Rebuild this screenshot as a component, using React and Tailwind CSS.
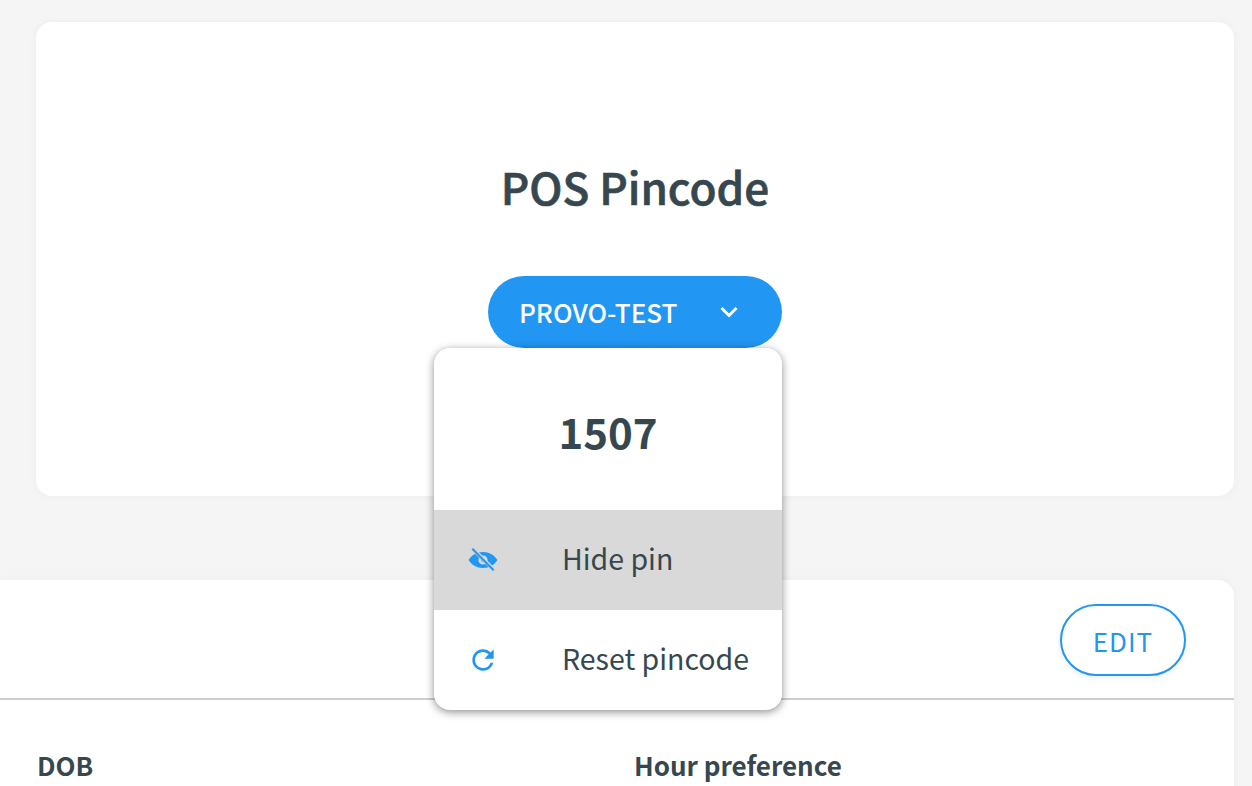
import React from "react";

const font = "font-['Noto_Sans_CJK_SC','Source_Sans_Pro','Noto_Sans',sans-serif]";

const EyeOffIcon = () => (
  <svg width="32" height="32" viewBox="0 0 30 30" fill="none">
    <path
      fillRule="evenodd"
      d="M15 7.500c-5.800 0-10.800 3-13.500 7.500 2.700 4.500 7.700 7.500 13.500 7.500s10.800-3 13.500-7.500C25.800 10.500 20.800 7.500 15 7.500Zm0 3.200a4.300 4.300 0 1 1 0 8.600 4.300 4.300 0 0 1 0-8.600Z"
      fill="#2196f3"
    />
    <path d="M15 12.800a2.200 2.200 0 1 1 0 4.400 2.200 2.200 0 0 1 0-4.400Z" fill="#2196f3" opacity="0.5" />
    <path d="M6 5 25.500 24.500" stroke="#d9d9d9" strokeWidth="3.600" />
    <path d="M5 4.500 25 24.500" stroke="#2196f3" strokeWidth="2" />
  </svg>
);

const RefreshIcon = () => (
  <svg width="32" height="32" viewBox="0 0 24 24" fill="#2196f3">
    <path d="M17.650 6.350A7.958 7.958 0 0 0 12 4c-4.420 0-7.990 3.580-7.990 8s3.570 8 7.990 8c3.730 0 6.840-2.550 7.730-6h-2.080A5.990 5.990 0 0 1 12 18c-3.310 0-6-2.690-6-6s2.690-6 6-6c1.660 0 3.140.69 4.220 1.780L13 11h7V4l-2.350 2.350Z" />
  </svg>
);

const MenuItem = ({ icon, label, active }) => (
  <div className={`flex h-[100px] items-center ${active ? "bg-[#d9d9d9]" : ""}`}>
    <div className="flex w-[128px] justify-center pr-[31px]">{icon}</div>
    <span className="pb-[3px] text-[28.5px] leading-none text-[#37474f]">{label}</span>
  </div>
);

export default function App() {
  return (
    <div className={`h-[786px] overflow-hidden bg-[#f5f5f5] pt-[22px] pr-[18px] ${font}`}>
      <section className="relative ml-[36px] flex h-[474px] flex-col items-center rounded-[16px] bg-white pt-[132px] shadow-[0_0_10px_rgba(0,0,0,0.04)]">
        <h1 className="text-[44px] leading-[64px] font-medium text-[#37474f] [-webkit-text-stroke:0.7px_#37474f]">
          POS Pincode
        </h1>
        <div className="relative mt-[58px]">
          <button
            type="button"
            className="flex h-[72px] w-[294px] items-center rounded-full bg-[#2196f3] pb-[2px] pl-[31px] text-[26px] font-medium text-white"
          >
            PROVO-TEST
            <svg width="20" height="14" viewBox="0 0 20 14" fill="none" className="mt-[2px] ml-[42px]">
              <path d="M2.500 3 10 10.500 17.500 3" stroke="#fff" strokeWidth="3" />
            </svg>
          </button>
          <div className="absolute top-[72px] right-0 z-10 w-[348px] overflow-hidden rounded-[16px] bg-white shadow-[0_2px_8px_rgba(0,0,0,0.45)]">
            <div className="flex h-[162px] items-center justify-center pt-[2px] text-[42px] font-semibold text-[#37474f]">
              1507
            </div>
            <MenuItem icon={<EyeOffIcon />} label="Hide pin" active />
            <MenuItem icon={<RefreshIcon />} label="Reset pincode" />
          </div>
        </div>
      </section>

      <section className="mt-[84px] h-[300px] rounded-tr-[16px] bg-white shadow-[0_0_10px_rgba(0,0,0,0.04)]">
        <div className="flex h-[120px] items-center justify-end border-b-2 border-[#cfcfcf] pt-[4px] pr-[48px] pb-[2px]">
          <button
            type="button"
            className="flex h-[72px] w-[126px] items-center justify-center rounded-full border-2 border-[#2196f3] bg-white text-[26px] tracking-[1px] text-[#2196f3] shadow-[0_2px_6px_rgba(0,0,0,0.08)]"
          >
            EDIT
          </button>
        </div>
        <div className="grid grid-cols-[597px_1fr] pt-[43px] pl-[37px] text-[26px] leading-[44px] font-semibold text-[#37474f]">
          <div>DOB</div>
          <div>Hour preference</div>
        </div>
      </section>
    </div>
  );
}
